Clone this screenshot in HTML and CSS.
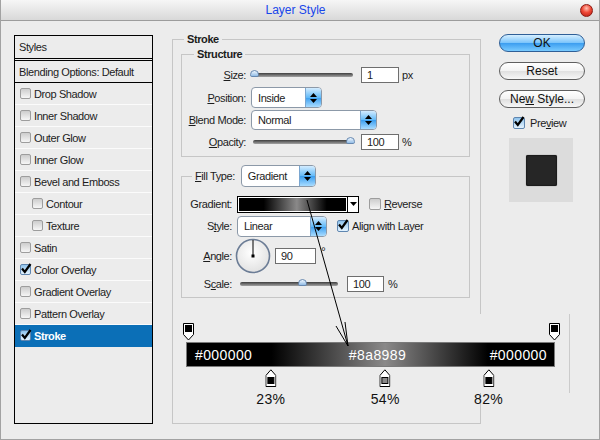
FILE: index.html
```html
<!doctype html>
<html lang="en">
  <head>
    <meta charset="UTF-8" />
    <title>Layer Style</title>
    <link rel="stylesheet" href="styles.css">
  </head>
  <body>
    <div class="dialog">
      <div class="titlebar">
        <span class="title">Layer Style</span>
        <span class="close"></span>
      </div>

      <div class="dialog-body">
        <!-- Left column: list of effects -->
        <ul class="styles-list">
          <li class="list-head">Styles</li>
          <li class="list-blend">Blending Options: Default</li>
          <li><span class="check"></span>Drop Shadow</li>
          <li><span class="check"></span>Inner Shadow</li>
          <li><span class="check"></span>Outer Glow</li>
          <li><span class="check"></span>Inner Glow</li>
          <li><span class="check"></span>Bevel and Emboss</li>
          <li class="sub"><span class="check"></span>Contour</li>
          <li class="sub"><span class="check"></span>Texture</li>
          <li><span class="check"></span>Satin</li>
          <li><span class="check checked"><svg width="12" height="12" viewBox="0 0 12 12"><path d="M2 5.5 L4.8 9 L10.5 1" /></svg></span>Color Overlay</li>
          <li><span class="check"></span>Gradient Overlay</li>
          <li><span class="check"></span>Pattern Overlay</li>
          <li class="active"><span class="check checked"><svg width="12" height="12" viewBox="0 0 12 12"><path d="M2 5.5 L4.8 9 L10.5 1" /></svg></span>Stroke</li>
        </ul>

        <!-- Middle column: stroke settings -->
        <fieldset class="group stroke-group">
          <legend>Stroke</legend>

          <fieldset class="group inner-group structure">
            <legend>Structure</legend>
            <div class="field row-a">
              <label><u>S</u>ize:</label>
              <div class="slider size-slider"><span class="thumb" style="left: 3%"></span></div>
              <span class="input num">1</span>
              <span class="unit">px</span>
            </div>
            <div class="field row-b">
              <label><u>P</u>osition:</label>
              <span class="select sel-position"><span class="select-text">Inside</span><span class="spin"><svg width="7" height="12" viewBox="0 0 7 12"><path d="M0 5 L3.5 1 L7 5 Z M0 7 L3.5 11 L7 7 Z" /></svg></span></span>
            </div>
            <div class="field row-a">
              <label><u>B</u>lend Mode:</label>
              <span class="select sel-blend"><span class="select-text">Normal</span><span class="spin"><svg width="7" height="12" viewBox="0 0 7 12"><path d="M0 5 L3.5 1 L7 5 Z M0 7 L3.5 11 L7 7 Z" /></svg></span></span>
            </div>
            <div class="field row-a">
              <label><u>O</u>pacity:</label>
              <div class="slider opacity-slider"><span class="thumb" style="left: 97%"></span></div>
              <span class="input num">100</span>
              <span class="unit">%</span>
            </div>
          </fieldset>

          <fieldset class="group inner-group fill">
            <legend>
              <label><u>F</u>ill Type:</label>
              <span class="select sel-fill"><span class="select-text">Gradient</span><span class="spin"><svg width="7" height="12" viewBox="0 0 7 12"><path d="M0 5 L3.5 1 L7 5 Z M0 7 L3.5 11 L7 7 Z" /></svg></span></span>
            </legend>
            <div class="field row-grad">
              <label>Gradient:</label>
              <span class="swatch"><span class="swatch-ramp"></span><span class="swatch-drop"><svg width="7" height="4" viewBox="0 0 7 4"><path d="M0 0 H7 L3.5 4 Z" /></svg></span></span>
              <span class="check opt-check"></span>
              <span><u>R</u>everse</span>
            </div>
            <div class="field row-style">
              <label>S<u>t</u>yle:</label>
              <span class="select sel-style"><span class="select-text">Linear</span><span class="spin"><svg width="7" height="12" viewBox="0 0 7 12"><path d="M0 5 L3.5 1 L7 5 Z M0 7 L3.5 11 L7 7 Z" /></svg></span></span>
              <span class="check checked opt-check"><svg width="12" height="12" viewBox="0 0 12 12"><path d="M2 5.5 L4.8 9 L10.5 1" /></svg></span>
              <span>Ali<u>g</u>n with Layer</span>
            </div>
            <div class="field row-angle">
              <label><u>A</u>ngle:</label>
              <svg class="dial" width="36" height="36" viewBox="0 0 36 36">
                <defs>
                  <radialGradient id="dialFace" cx="45%" cy="40%" r="60%">
                    <stop offset="0" stop-color="#ffffff" />
                    <stop offset="1" stop-color="#e2e2e2" />
                  </radialGradient>
                </defs>
                <circle cx="18" cy="18" r="16.5" fill="url(#dialFace)" stroke="#6c7d96" stroke-width="1.6" />
                <line x1="18" y1="18" x2="18" y2="2" stroke="#000" stroke-width="1" />
                <rect x="16.5" y="16.5" width="3" height="3" fill="#000" />
              </svg>
              <span class="input angle-input">90</span>
              <span class="degree">&deg;</span>
            </div>
            <div class="field row-scale">
              <label>S<u>c</u>ale:</label>
              <div class="slider scale-slider"><span class="thumb" style="left: 63%"></span></div>
              <span class="input scale-input">100</span>
              <span class="unit">%</span>
            </div>
          </fieldset>
        </fieldset>

        <!-- Right column: buttons and preview -->
        <div class="actions">
          <button class="btn btn-ok">OK</button>
          <button class="btn">Reset</button>
          <button class="btn">Ne<u>w</u> Style...</button>
          <div class="preview-check">
            <span class="check checked"><svg width="12" height="12" viewBox="0 0 12 12"><path d="M2 5.5 L4.8 9 L10.5 1" /></svg></span>
            <span>Pre<u>v</u>iew</span>
          </div>
          <div class="preview-box"><div class="preview-swatch"></div></div>
        </div>
      </div>

      <!-- Callout: the gradient stops, enlarged -->
      <div class="grad-callout">
        <div class="grad-track">
          <svg class="stop-top stop-left" width="11" height="18" viewBox="0 0 11 18"><path d="M0.5 0.5 H10.5 V11.5 L5.5 17 L0.5 11.5 Z" fill="#fff" stroke="#000" /><rect x="2" y="2" width="7" height="7" fill="#000" /></svg>
          <svg class="stop-top stop-right" width="11" height="18" viewBox="0 0 11 18"><path d="M0.5 0.5 H10.5 V11.5 L5.5 17 L0.5 11.5 Z" fill="#fff" stroke="#000" /><rect x="2" y="2" width="7" height="7" fill="#000" /></svg>

          <div class="grad-bar">
            <span>#000000</span>
            <span class="mid-hex">#8a8989</span>
            <span>#000000</span>
          </div>

          <div class="stop" style="left: 23%">
            <svg width="11" height="18" viewBox="0 0 11 18"><path d="M5.5 0.8 L10.5 6.5 V17.5 H0.5 V6.5 Z" fill="#fff" stroke="#000" /><rect x="2.5" y="8.5" width="6" height="6" fill="#000" stroke="#000" /></svg>
            <span class="stop-label">23%</span>
          </div>
          <div class="stop" style="left: 54%">
            <svg width="11" height="18" viewBox="0 0 11 18"><path d="M5.5 0.8 L10.5 6.5 V17.5 H0.5 V6.5 Z" fill="#fff" stroke="#000" /><rect x="2.5" y="8.5" width="6" height="6" fill="#8a8989" stroke="#000" /></svg>
            <span class="stop-label">54%</span>
          </div>
          <div class="stop" style="left: 82%">
            <svg width="11" height="18" viewBox="0 0 11 18"><path d="M5.5 0.8 L10.5 6.5 V17.5 H0.5 V6.5 Z" fill="#fff" stroke="#000" /><rect x="2.5" y="8.5" width="6" height="6" fill="#000" stroke="#000" /></svg>
            <span class="stop-label">82%</span>
          </div>
        </div>
      </div>

      <svg class="pointer" width="600" height="440" viewBox="0 0 600 440">
        <path d="M306 200 L347 346 M335 326 L347 346 L344 322" fill="none" stroke="#000" stroke-width="1" />
      </svg>
    </div>
  </body>
</html>
```

FILE: styles.css
```css
* {
  box-sizing: border-box;
}
body {
  margin: 0;
  font-family: "Liberation Sans", Arial, sans-serif;
  font-size: 11px;
  letter-spacing: -0.4px;
  color: #1c1c1c;
}
u {
  text-decoration-thickness: 1px;
}
.dialog {
  position: relative;
  width: 600px;
  height: 440px;
  background: #ececec;
  border: 1px solid #a2a2a2;
  border-top: 0;
  overflow: hidden;
}
.titlebar {
  display: flex;
  align-items: center;
  height: 21px;
  border-bottom: 1px solid #9c9c9c;
  background: linear-gradient(#f6f6f6, #d8d8d8);
}
.title {
  flex: 1;
  text-align: center;
  padding-left: 10px;
  font-size: 12px;
  letter-spacing: 0;
  color: #1846ea;
}
.close {
  width: 13px;
  height: 13px;
  margin-right: 6px;
  border-radius: 50%;
  border: 1px solid #8c1a12;
  background: radial-gradient(circle at 50% 30%, #ffc2b4 0, #f04a38 45%, #b41a10 100%);
}
.dialog-body {
  display: flex;
  align-items: flex-start;
}

/* left list */
.styles-list {
  flex: none;
  list-style: none;
  margin: 14px 0 0 13px;
  padding: 0;
  width: 139px;
  height: 389px;
  border: 1px solid #000;
}
.styles-list li {
  display: flex;
  align-items: center;
  height: 22px;
  padding-left: 5px;
  border-bottom: 1px solid #fbfbfb;
}
.styles-list .list-head {
  height: 25px;
  padding-left: 4px;
  border-bottom: 3px double #000;
}
.styles-list .list-blend {
  padding-left: 4px;
  border-bottom-color: #000;
}
.styles-list .sub {
  padding-left: 17px;
}
.styles-list .active {
  background: #0b6fb7;
  border-bottom-color: #0b6fb7;
  color: #fff;
  font-weight: bold;
}
.check {
  position: relative;
  flex: none;
  width: 11px;
  height: 11px;
  margin-right: 3px;
  border: 1px solid #9d9d9d;
  border-radius: 2px;
  background: linear-gradient(#cdcdcd, #f6f6f6);
}
.check.checked {
  border-color: #5f86b0;
  background: linear-gradient(#8fc3ec, #e4f3ff);
}
.check svg {
  position: absolute;
  left: -1px;
  top: -2px;
}
.check path {
  fill: none;
  stroke: #000;
  stroke-width: 2.2;
}

/* group boxes */
.group {
  margin: 0;
  padding: 0;
  min-width: 0;
  border: 1px solid #c6c6c6;
}
.group > legend {
  padding: 0 3px;
  line-height: 13px;
  font-weight: bold;
}
.stroke-group {
  flex: none;
  width: 309px;
  height: 391px;
  margin: 12px 0 0 19px;
  padding: 0 10px 0 8px;
}
.stroke-group > legend {
  margin-left: 3px;
}
.structure {
  margin-top: 2px;
  padding: 3px 0 3px;
}
.structure > legend {
  margin-left: 12px;
}
.fill {
  margin-top: 8px;
  padding: 6px 0 3px;
}
.fill > legend {
  display: flex;
  align-items: center;
  margin-left: 10px;
  font-weight: normal;
}
.fill > legend label {
  margin-right: 6px;
}

.field {
  display: flex;
  align-items: center;
  height: 22px;
}
.field > label {
  flex: none;
  width: 64px;
  margin-right: 5px;
  text-align: right;
}
.fill .field > label {
  width: 50px;
}
.row-b {
  height: 23px;
}
.row-style {
  height: 22px;
}
.row-angle {
  height: 37px;
}
.row-scale {
  height: 20px;
}

/* controls */
.slider {
  position: relative;
  flex: none;
  height: 4px;
  border-radius: 2px;
  background: linear-gradient(#3e3e3e, #a4a4a4);
}
.thumb {
  position: absolute;
  top: -3px;
  width: 9px;
  height: 7px;
  margin-left: -4px;
  border: 1px solid #6688b0;
  border-radius: 5px 5px 2px 2px;
  background: linear-gradient(#eef7ff, #93bde6);
}
.size-slider {
  width: 102px;
  margin-right: 8px;
}
.opacity-slider {
  width: 100px;
  margin: 0 8px 0 2px;
}
.scale-slider {
  width: 98px;
  margin: 0 9px 0 3px;
}
.input {
  flex: none;
  height: 16px;
  border: 1px solid #6e6e6e;
  background: #fff;
  padding-left: 5px;
  line-height: 14px;
}
.num {
  width: 38px;
}
.unit {
  margin-left: 3px;
}
.row-scale .unit {
  margin-left: 4px;
}
.select {
  display: flex;
  flex: none;
  align-items: stretch;
  height: 21px;
  border: 1px solid #8c99a8;
  border-radius: 4px;
  background: #fff;
  overflow: hidden;
}
.select-text {
  flex: 1;
  display: flex;
  align-items: center;
  padding-left: 6px;
}
.spin {
  display: flex;
  align-items: center;
  justify-content: center;
  width: 16px;
  border-left: 1px solid #7aa6d0;
  background: linear-gradient(#d3ecff, #62baf8 50%, #3c9ff0 52%, #a9dcff);
}
.spin path {
  fill: #000;
}
.sel-position {
  width: 71px;
}
.sel-blend {
  width: 126px;
  height: 20px;
}
.sel-fill {
  width: 75px;
  height: 22px;
}
.sel-style {
  width: 90px;
}
.swatch {
  display: flex;
  flex: none;
  width: 122px;
  height: 17px;
  border: 1px solid #000;
  background: #fff;
}
.swatch-ramp {
  flex: 1;
  border: 1px solid #fff;
  background: linear-gradient(to right, #000 0%, #000 23%, #8a8989 54%, #000 82%, #000 100%);
}
.swatch-drop {
  display: flex;
  align-items: center;
  justify-content: center;
  width: 11px;
  border-left: 1px solid #000;
}
.opt-check {
  width: 12px;
  height: 12px;
  margin: 0 3px 0 10px;
}
.dial {
  flex: none;
  margin-left: -2px;
}
.angle-input {
  width: 41px;
  height: 16px;
  margin-left: 4px;
}
.degree {
  align-self: flex-start;
  margin: 8px 0 0 5px;
  font-size: 12px;
}
.scale-input {
  width: 37px;
}

/* right column */
.actions {
  display: flex;
  flex: none;
  flex-direction: column;
  width: 86px;
  margin: 13px 0 0 18px;
}
.btn {
  height: 18px;
  margin: 0 0 10px;
  padding: 0;
  border: 1px solid #5f5f5f;
  border-radius: 9px;
  font-family: "Liberation Sans", Arial, sans-serif;
  font-size: 12px;
  letter-spacing: 0;
  color: #111;
  background: linear-gradient(#ffffff, #f3f3f3 50%, #e0e0e0 52%, #f7f7f7);
}
.btn-ok {
  border-color: #2f5f97;
  background: linear-gradient(#d6efff, #7cc5fb 48%, #3c9ef0 52%, #79cbff);
}
.preview-check {
  display: flex;
  align-items: center;
  margin: -2px 0 0 14px;
  height: 14px;
}
.preview-check .check {
  width: 12px;
  height: 12px;
  margin-right: 5px;
}
.preview-box {
  display: flex;
  align-items: center;
  justify-content: center;
  width: 64px;
  height: 64px;
  margin: 8px 0 0 10px;
  background: #dcdcdc;
}
.preview-swatch {
  width: 31px;
  height: 31px;
  border-radius: 2px;
  background: #262626;
  box-shadow: inset 0 0 2px #000, 0 0 1px #555;
}

/* gradient callout */
.grad-callout {
  position: absolute;
  left: 182px;
  top: 314px;
  width: 387px;
  height: 79px;
  padding: 28px 0 0 3px;
  background: #ececec;
  border-right: 1px solid #cbcbcb;
  font-size: 14px;
  letter-spacing: 0.4px;
  color: #111;
}
.grad-track {
  position: relative;
  width: 369px;
}
.grad-bar {
  display: flex;
  align-items: center;
  justify-content: space-between;
  height: 25px;
  padding: 0 7px 0 8px;
  border: 1px solid #7a7a7a;
  color: #fff;
  background: linear-gradient(to right, #000 0%, #000 23%, #8a8989 54%, #000 82%, #000 100%);
}
.mid-hex {
  margin-left: 13px;
}
.stop-top {
  position: absolute;
  top: -19px;
}
.stop-left {
  left: -3px;
}
.stop-right {
  right: -5px;
}
.stop {
  position: absolute;
  top: 27px;
  display: flex;
  flex-direction: column;
  align-items: center;
  transform: translateX(-50%);
}
.stop-label {
  margin-top: 4px;
  line-height: 16px;
}
.pointer {
  position: absolute;
  left: 0;
  top: 0;
  pointer-events: none;
}
```
